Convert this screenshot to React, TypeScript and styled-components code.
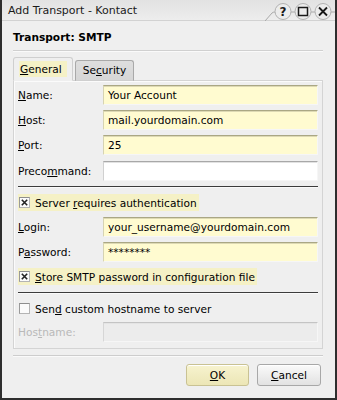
import React from "react";
import styled, { createGlobalStyle } from "styled-components";

const GlobalStyle = createGlobalStyle`
  html, body {
    margin: 0;
    padding: 0;
    background: #efefef;
  }
  * {
    box-sizing: border-box;
  }
`;

const Window = styled.div`
  width: 337px;
  height: 400px;
  display: flex;
  flex-direction: column;
  background: #efefef;
  border: 2px solid #2e2e2e;
  border-top: none;
  font-family: "DejaVu Sans", "Bitstream Vera Sans", sans-serif;
  font-size: 10.6px;
  color: #000;
`;

const TitleBar = styled.div`
  height: 21px;
  display: flex;
  align-items: center;
  justify-content: space-between;
  padding-left: 6px;
  background: linear-gradient(#e2e2e2, #ededed);
  border-bottom: 1px solid #d2d2d2;
  font-size: 11px;
  color: #1a1a1a;
`;

const TitleText = styled.span`
  padding-top: 1px;
`;

const Body = styled.div`
  flex: 1;
  display: flex;
  flex-direction: column;
  padding: 0 12px 0 11px;
`;

const Heading = styled.div`
  margin-top: 9px;
  font-weight: bold;
  line-height: 14px;
`;

const Rule = styled.div<{ $dark?: boolean }>`
  height: 2px;
  border-top: 1px solid ${(p) => (p.$dark ? "#3c3c3c" : "#d0d0d0")};
  border-bottom: 1px solid #fafafa;
`;

const TopRule = styled(Rule)`
  margin-top: 6px;
`;

const Tabs = styled.div`
  display: flex;
  align-items: flex-end;
  gap: 2px;
  margin-top: 5px;
  margin-bottom: -1px;
  position: relative;
  z-index: 1;
`;

const Tab = styled.div<{ $active?: boolean }>`
  height: ${(p) => (p.$active ? "24px" : "21px")};
  padding: ${(p) => (p.$active ? "3px 5px 0 5px" : "3px 7px 0 7px")};
  border: 1px solid ${(p) => (p.$active ? "#cfcfcf" : "#a9a9a9")};
  border-bottom: ${(p) => (p.$active ? "1px solid #efefef" : "1px solid #cfcfcf")};
  border-radius: 3px 3px 0 0;
  background: ${(p) => (p.$active ? "#efefef" : "linear-gradient(#dedede, #d6d6d6)")};
`;

const TabLabel = styled.span<{ $focus?: boolean }>`
  display: inline-block;
  line-height: 16px;
  padding: 0 5px 0 1px;
  background: ${(p) => (p.$focus ? "#f5f1c6" : "transparent")};
`;

const Panel = styled.div`
  width: 310px;
  height: 269px;
  display: flex;
  flex-direction: column;
  padding: 4px 4px 0 4px;
  border: 1px solid #d4d4d4;
  box-shadow: inset 1px 1px 0 #fbfbfb;
`;

const FieldRow = styled.div<{ $gap?: number }>`
  display: grid;
  grid-template-columns: 85px 1fr;
  align-items: center;
  height: 20px;
  margin-top: ${(p) => p.$gap ?? 0}px;
`;

const Label = styled.span<{ $disabled?: boolean }>`
  color: ${(p) => (p.$disabled ? "#b9b9b9" : "#000")};
`;

const Field = styled.div<{ $tone: "yellow" | "white" | "disabled" }>`
  height: 20px;
  display: flex;
  align-items: center;
  padding-left: 4px;
  background: ${(p) =>
    p.$tone === "yellow" ? "#fffbd0" : p.$tone === "white" ? "#ffffff" : "#ececec"};
  border-top: 1px solid
    ${(p) => (p.$tone === "yellow" ? "#aaa784" : p.$tone === "white" ? "#a8a8a8" : "#c4c4c4")};
  border-left: 1px solid
    ${(p) => (p.$tone === "yellow" ? "#d6d3b2" : p.$tone === "white" ? "#d0d0d0" : "#d6d6d6")};
  border-right: 1px solid #f6f6f6;
  border-bottom: 1px solid #f6f6f6;
  box-shadow: inset 0 1px 0
    ${(p) => (p.$tone === "yellow" ? "#ddd9b4" : p.$tone === "white" ? "#e2e2e2" : "#e4e4e4")};
`;

const PanelRule = styled(Rule)<{ $gap: number }>`
  margin-top: ${(p) => p.$gap}px;
`;

const CheckRow = styled.div<{ $gap: number; $focus?: boolean }>`
  align-self: flex-start;
  display: flex;
  align-items: center;
  gap: 5px;
  height: 17px;
  padding: 0 2px 0 1px;
  margin-top: ${(p) => p.$gap}px;
  background: ${(p) => (p.$focus ? "#f5f1c6" : "transparent")};
`;

const Box = styled.span`
  width: 11px;
  height: 11px;
  display: flex;
  align-items: center;
  justify-content: center;
  background: #fbfbfb;
  border: 1px solid #b4b4b4;
  border-top-color: #8e8e8e;
  border-left-color: #9a9a9a;
`;

const FooterRule = styled(Rule)`
  margin-top: 6px;
  border-top-color: #cdcdcd;
`;

const ButtonRow = styled.div`
  display: flex;
  justify-content: flex-end;
  gap: 8px;
  margin-top: 7px;
  padding-right: 2px;
`;

const Button = styled.button<{ $default?: boolean }>`
  width: ${(p) => (p.$default ? "63px" : "64px")};
  height: 22px;
  font: inherit;
  color: #000;
  border-radius: 3px;
  border: 1px solid ${(p) => (p.$default ? "#c9c293" : "#a8a8a8")};
  background: ${(p) =>
    p.$default
      ? "linear-gradient(#f7f3cf, #ece6b6)"
      : "linear-gradient(#fafafa, #e2e2e2)"};
  box-shadow: inset 0 1px 0 #ffffff;
  padding: 0;
`;

const Caption = ({ text, at }: { text: string; at: number }) => (
  <>
    {text.slice(0, at)}
    <u>{text[at]}</u>
    {text.slice(at + 1)}
  </>
);

const CheckMark = () => (
  <svg width="7" height="7" viewBox="0 0 7 7">
    <path d="M0.8 0.8 L6.2 6.2 M6.2 0.8 L0.8 6.2" stroke="#222" strokeWidth="1.6" />
  </svg>
);

const WindowButtons = () => (
  <svg width="70" height="21" viewBox="0 0 70 21">
    <path
      d="M0 21 L7 13 Q8 12 10 12 L70 12"
      fill="none"
      stroke="#a9a9a9"
      strokeWidth="1"
    />
    {[18, 38, 58].map((cx) => (
      <circle key={cx} cx={cx} cy={11.5} r={8} fill="#ececec" stroke="#b2b2b2" />
    ))}
    <text
      x="18"
      y="16"
      textAnchor="middle"
      fontFamily="DejaVu Sans, sans-serif"
      fontSize="12"
      fontWeight="bold"
      fill="#1a1a1a"
    >
      ?
    </text>
    <rect x="33.5" y="7.5" width="9" height="8" fill="none" stroke="#1a1a1a" strokeWidth="1.5" />
    <path d="M54 7.5 L62 15.5 M62 7.5 L54 15.5" stroke="#1a1a1a" strokeWidth="1.8" />
  </svg>
);

export default function App() {
  return (
    <>
      <GlobalStyle />
      <Window>
        <TitleBar>
          <TitleText>Add Transport - Kontact</TitleText>
          <WindowButtons />
        </TitleBar>
        <Body>
          <Heading>Transport: SMTP</Heading>
          <TopRule />
          <Tabs>
            <Tab $active>
              <TabLabel $focus>
                <Caption text="General" at={0} />
              </TabLabel>
            </Tab>
            <Tab>
              <Caption text="Security" at={2} />
            </Tab>
          </Tabs>
          <Panel>
            <FieldRow>
              <Label>
                <Caption text="Name:" at={0} />
              </Label>
              <Field $tone="yellow">Your Account</Field>
            </FieldRow>
            <FieldRow $gap={5}>
              <Label>
                <Caption text="Host:" at={0} />
              </Label>
              <Field $tone="yellow">mail.yourdomain.com</Field>
            </FieldRow>
            <FieldRow $gap={5}>
              <Label>
                <Caption text="Port:" at={0} />
              </Label>
              <Field $tone="yellow">25</Field>
            </FieldRow>
            <FieldRow $gap={6}>
              <Label>
                <Caption text="Precommand:" at={5} />
              </Label>
              <Field $tone="white" />
            </FieldRow>
            <PanelRule $dark $gap={5} />
            <CheckRow $gap={6} $focus>
              <Box>
                <CheckMark />
              </Box>
              <span>
                <Caption text="Server requires authentication" at={7} />
              </span>
            </CheckRow>
            <FieldRow $gap={6}>
              <Label>
                <Caption text="Login:" at={0} />
              </Label>
              <Field $tone="yellow">your_username@yourdomain.com</Field>
            </FieldRow>
            <FieldRow $gap={5}>
              <Label>
                <Caption text="Password:" at={1} />
              </Label>
              <Field $tone="yellow">********</Field>
            </FieldRow>
            <CheckRow $gap={6} $focus>
              <Box>
                <CheckMark />
              </Box>
              <span>
                <Caption text="Store SMTP password in configuration file" at={0} />
              </span>
            </CheckRow>
            <PanelRule $dark $gap={7} />
            <CheckRow $gap={6}>
              <Box />
              <span>
                <Caption text="Send custom hostname to server" at={3} />
              </span>
            </CheckRow>
            <FieldRow $gap={5}>
              <Label $disabled>
                <Caption text="Hostname:" at={3} />
              </Label>
              <Field $tone="disabled" />
            </FieldRow>
          </Panel>
          <FooterRule />
          <ButtonRow>
            <Button $default>
              <Caption text="OK" at={0} />
            </Button>
            <Button>
              <Caption text="Cancel" at={0} />
            </Button>
          </ButtonRow>
        </Body>
      </Window>
    </>
  );
}
